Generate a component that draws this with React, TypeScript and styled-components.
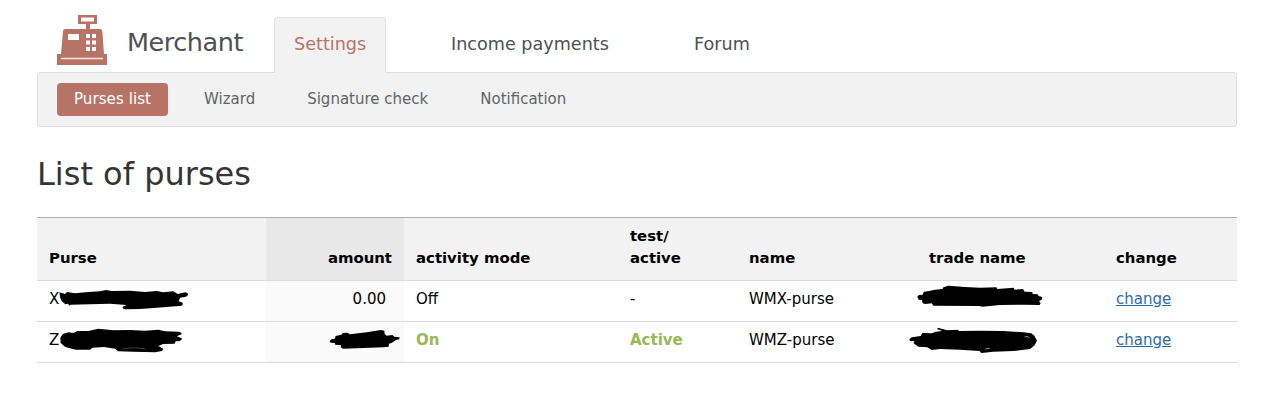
import React from "react";
import styled, { createGlobalStyle, css } from "styled-components";

const accent = "#b87367";

const GlobalStyle = createGlobalStyle`
  * { box-sizing: border-box; }
  body {
    margin: 0;
    background: #fff;
    color: #000;
    font-family: Verdana, "DejaVu Sans", sans-serif;
    font-size: 15px;
    overflow: hidden;
  }
`;

const Page = styled.div`
  width: 1200px;
  margin-left: 37px;
`;

const Header = styled.header`
  display: flex;
  align-items: flex-end;
  height: 72px;
  padding-left: 20px;
`;

const Logo = styled.svg`
  display: block;
  width: 50px;
  height: 50px;
  margin-bottom: 7px;
`;

const Brand = styled.div`
  width: 147px;
  margin-left: 20px;
  line-height: 60px;
  font-size: 25.5px;
  letter-spacing: -0.45px;
  color: #4f5153;
  white-space: nowrap;
`;

const Tab = styled.a<{ $width: number; $active?: boolean }>`
  width: ${(p) => p.$width}px;
  height: 56px;
  margin-bottom: -1px;
  padding-left: 19px;
  border: 1px solid transparent;
  border-bottom: 0;
  line-height: 52px;
  font-size: 17.6px;
  color: #4f5153;
  white-space: nowrap;
  ${(p) =>
    p.$active &&
    css`
      position: relative;
      background: #f2f2f2;
      border-color: #e2e2e2;
      border-radius: 4px 4px 0 0;
      color: ${accent};
    `}
`;

const TabGroup = styled.nav`
  display: flex;
  gap: 45px;
`;

const SubNav = styled.nav`
  display: flex;
  align-items: center;
  gap: 18px;
  height: 55px;
  padding: 0 19px;
  background: #f2f2f2;
  border: 1px solid #dedede;
  border-radius: 3px;
`;

const SubLink = styled.a<{ $active?: boolean }>`
  height: 33px;
  padding: 0 17px;
  border-radius: 4px;
  line-height: 32px;
  color: ${(p) => (p.$active ? "#fff" : "#616365")};
  background: ${(p) => (p.$active ? accent : "transparent")};
  ${(p) => p.$active && "width: 111px; margin-right: 1px; letter-spacing: 0.08px;"}
`;

const Title = styled.h1`
  margin: 27px 0 22px;
  height: 41px;
  line-height: 41px;
  font-size: 32px;
  font-weight: 400;
  color: #333536;
`;

const Table = styled.table`
  width: 1200px;
  table-layout: fixed;
  border-collapse: separate;
  border-spacing: 0;
  line-height: 22px;
`;

const HeadCell = styled.th<{ $amount?: boolean }>`
  height: 64px;
  padding: 0 12px 11px;
  vertical-align: bottom;
  text-align: ${(p) => (p.$amount ? "right" : "left")};
  font-size: 14.9px;
  background: ${(p) => (p.$amount ? "#e8e8e8" : "#f2f2f2")};
  border-top: 1px solid #adadad;
  border-bottom: 1px solid #dcdcdc;
`;

const Cell = styled.td<{ $amount?: boolean }>`
  position: relative;
  height: 41px;
  padding: 0 ${(p) => (p.$amount ? 18 : 12)}px 5px 12px;
  vertical-align: middle;
  text-align: ${(p) => (p.$amount ? "right" : "left")};
  background: ${(p) => (p.$amount ? "#fafafa" : "#fff")};
  border-bottom: 1px solid #dadada;
`;

const Positive = styled.strong`
  color: #98b954;
`;

const Link = styled.a`
  color: #2a6da6;
  text-decoration: underline;
`;

const Marker = styled.svg<{ $left: number; $width: number }>`
  position: absolute;
  top: 0;
  left: ${(p) => p.$left}px;
  width: ${(p) => p.$width}px;
  height: 41px;
`;

const widths = [229, 138, 214, 119, 180, 187, 133];

export default function App() {
  return (
    <>
      <GlobalStyle />
      <Page>
        <Header>
          <Logo viewBox="0 0 50 50">
            <path
              fill={accent}
              fillRule="evenodd"
              d="M21 0h19v9h-7v5h10q2 0 2.300 2L47 39h3v11H0V39h4L6 16q.3-2 2.300-2H29V9h-8zM24 2.500v4h13v-4zM11 19v6h11v-6zM29 19v4h4v-4zM35 19v4h4v-4zM29 25.500v4h4v-4zM35 25.500v4h4v-4zM29 32v4h4v-4zM35 32v4h4v-4z"
            />
            <path d="M4 43.500h42" stroke="#f8e8dc" strokeWidth="1.500" />
          </Logo>
          <Brand>Merchant</Brand>
          <TabGroup>
            <Tab $width={112} $active>Settings</Tab>
            <Tab $width={198}>Income payments</Tab>
            <Tab $width={100}>Forum</Tab>
          </TabGroup>
        </Header>
        <SubNav>
          <SubLink $active>Purses list</SubLink>
          <SubLink>Wizard</SubLink>
          <SubLink>Signature check</SubLink>
          <SubLink>Notification</SubLink>
        </SubNav>
        <Title>List of purses</Title>
        <Table>
          <colgroup>
            {widths.map((width, i) => (
              <col key={i} width={width} />
            ))}
          </colgroup>
          <thead>
            <tr>
              <HeadCell>Purse</HeadCell>
              <HeadCell $amount>amount</HeadCell>
              <HeadCell>activity mode</HeadCell>
              <HeadCell>test/<br />active</HeadCell>
              <HeadCell>name</HeadCell>
              <HeadCell>trade name</HeadCell>
              <HeadCell>change</HeadCell>
            </tr>
          </thead>
          <tbody>
            <tr>
              <Cell>
                X
                <Marker $left={-7} $width={200} viewBox="0 33 600 123">
                  <path d="M88 67L105 72 111 66 135 70 175 66 210 64 228 60 245 63 300 62 345 66 380 63 400 67 430 64 443 72 466 67Q475 69 474 75L468 80 450 83 446 94 458 98Q460 104 455 107L400 112 330 117 290 118Q277 118 278 110L290 105 240 101 180 103 121 104 118 107 114 101 106 103 94 92 90 80Z" />
                </Marker>
              </Cell>
              <Cell $amount>0.00</Cell>
              <Cell>Off</Cell>
              <Cell>-</Cell>
              <Cell>WMX-purse</Cell>
              <Cell>
                <Marker $left={-27} $width={200} viewBox="0 243 600 123">
                  <path d="M82 290Q83 285 90 284L97 285 102 275 118 273 135 269 158 267 160 262 175 257 225 261 270 263 319 262 322 267 371 263 374 269 399 267 404 275 427 276 428 282 443 283 446 288 457 291 455 299 447 303 452 309 449 315 400 314 330 315 277 320 268 318 130 317 125 310 106 312 98 310 96 300 86 299Z" />
                </Marker>
              </Cell>
              <Cell><Link>change</Link></Cell>
            </tr>
            <tr>
              <Cell>
                Z
                <Marker $left={-7} $width={200} viewBox="0 156 600 123">
                  <path d="M91 204L98 192 116 187 130 189 142 183 175 183 205 176 250 181 300 180 345 182 385 179 405 184 445 185Q455 186 455 193L440 199 456 205Q456 211 449 213L437 214 434 221 399 222 385 228 400 236 396 243 375 247 310 245 264 244 255 236 222 231 188 233 180 239 137 239 106 231 92 219Z" />
                  <path d="M277 236Q310 231 345 236" fill="none" stroke="#777" strokeWidth="1.500" />
                </Marker>
              </Cell>
              <Cell $amount>
                <Marker $left={0} $width={138} viewBox="78 366 414 123">
                  <path d="M269 424L274 418 284 416 287 408 304 404 308 399 322 398 330 403 380 397 423 390 433 392 434 402 440 407 457 405 463 410 479 412 478 418 468 420 455 429 447 431 446 440 430 442 370 444 309 446 302 442 303 436 286 434 284 429 272 428Z" />
                </Marker>
              </Cell>
              <Cell><Positive>On</Positive></Cell>
              <Cell><Positive>Active</Positive></Cell>
              <Cell>WMZ-purse</Cell>
              <Cell>
                <Marker $left={-27} $width={200} viewBox="0 366 600 123">
                  <path d="M58 418L65 412 92 408 97 399 125 400 138 395 157 393 142 388 143 383 172 391 203 389 207 393 270 392 340 393 400 397 424 400 433 407 441 422 434 436 420 447 370 453 310 455 274 459 268 453 210 449 150 447 125 450 112 442 85 440 70 429 74 423 60 424Z" />
                  <path d="M404 411l9-2 5 6M286 447l13-2" fill="none" stroke="#ddd" strokeWidth="2" />
                </Marker>
              </Cell>
              <Cell><Link>change</Link></Cell>
            </tr>
          </tbody>
        </Table>
      </Page>
    </>
  );
}
